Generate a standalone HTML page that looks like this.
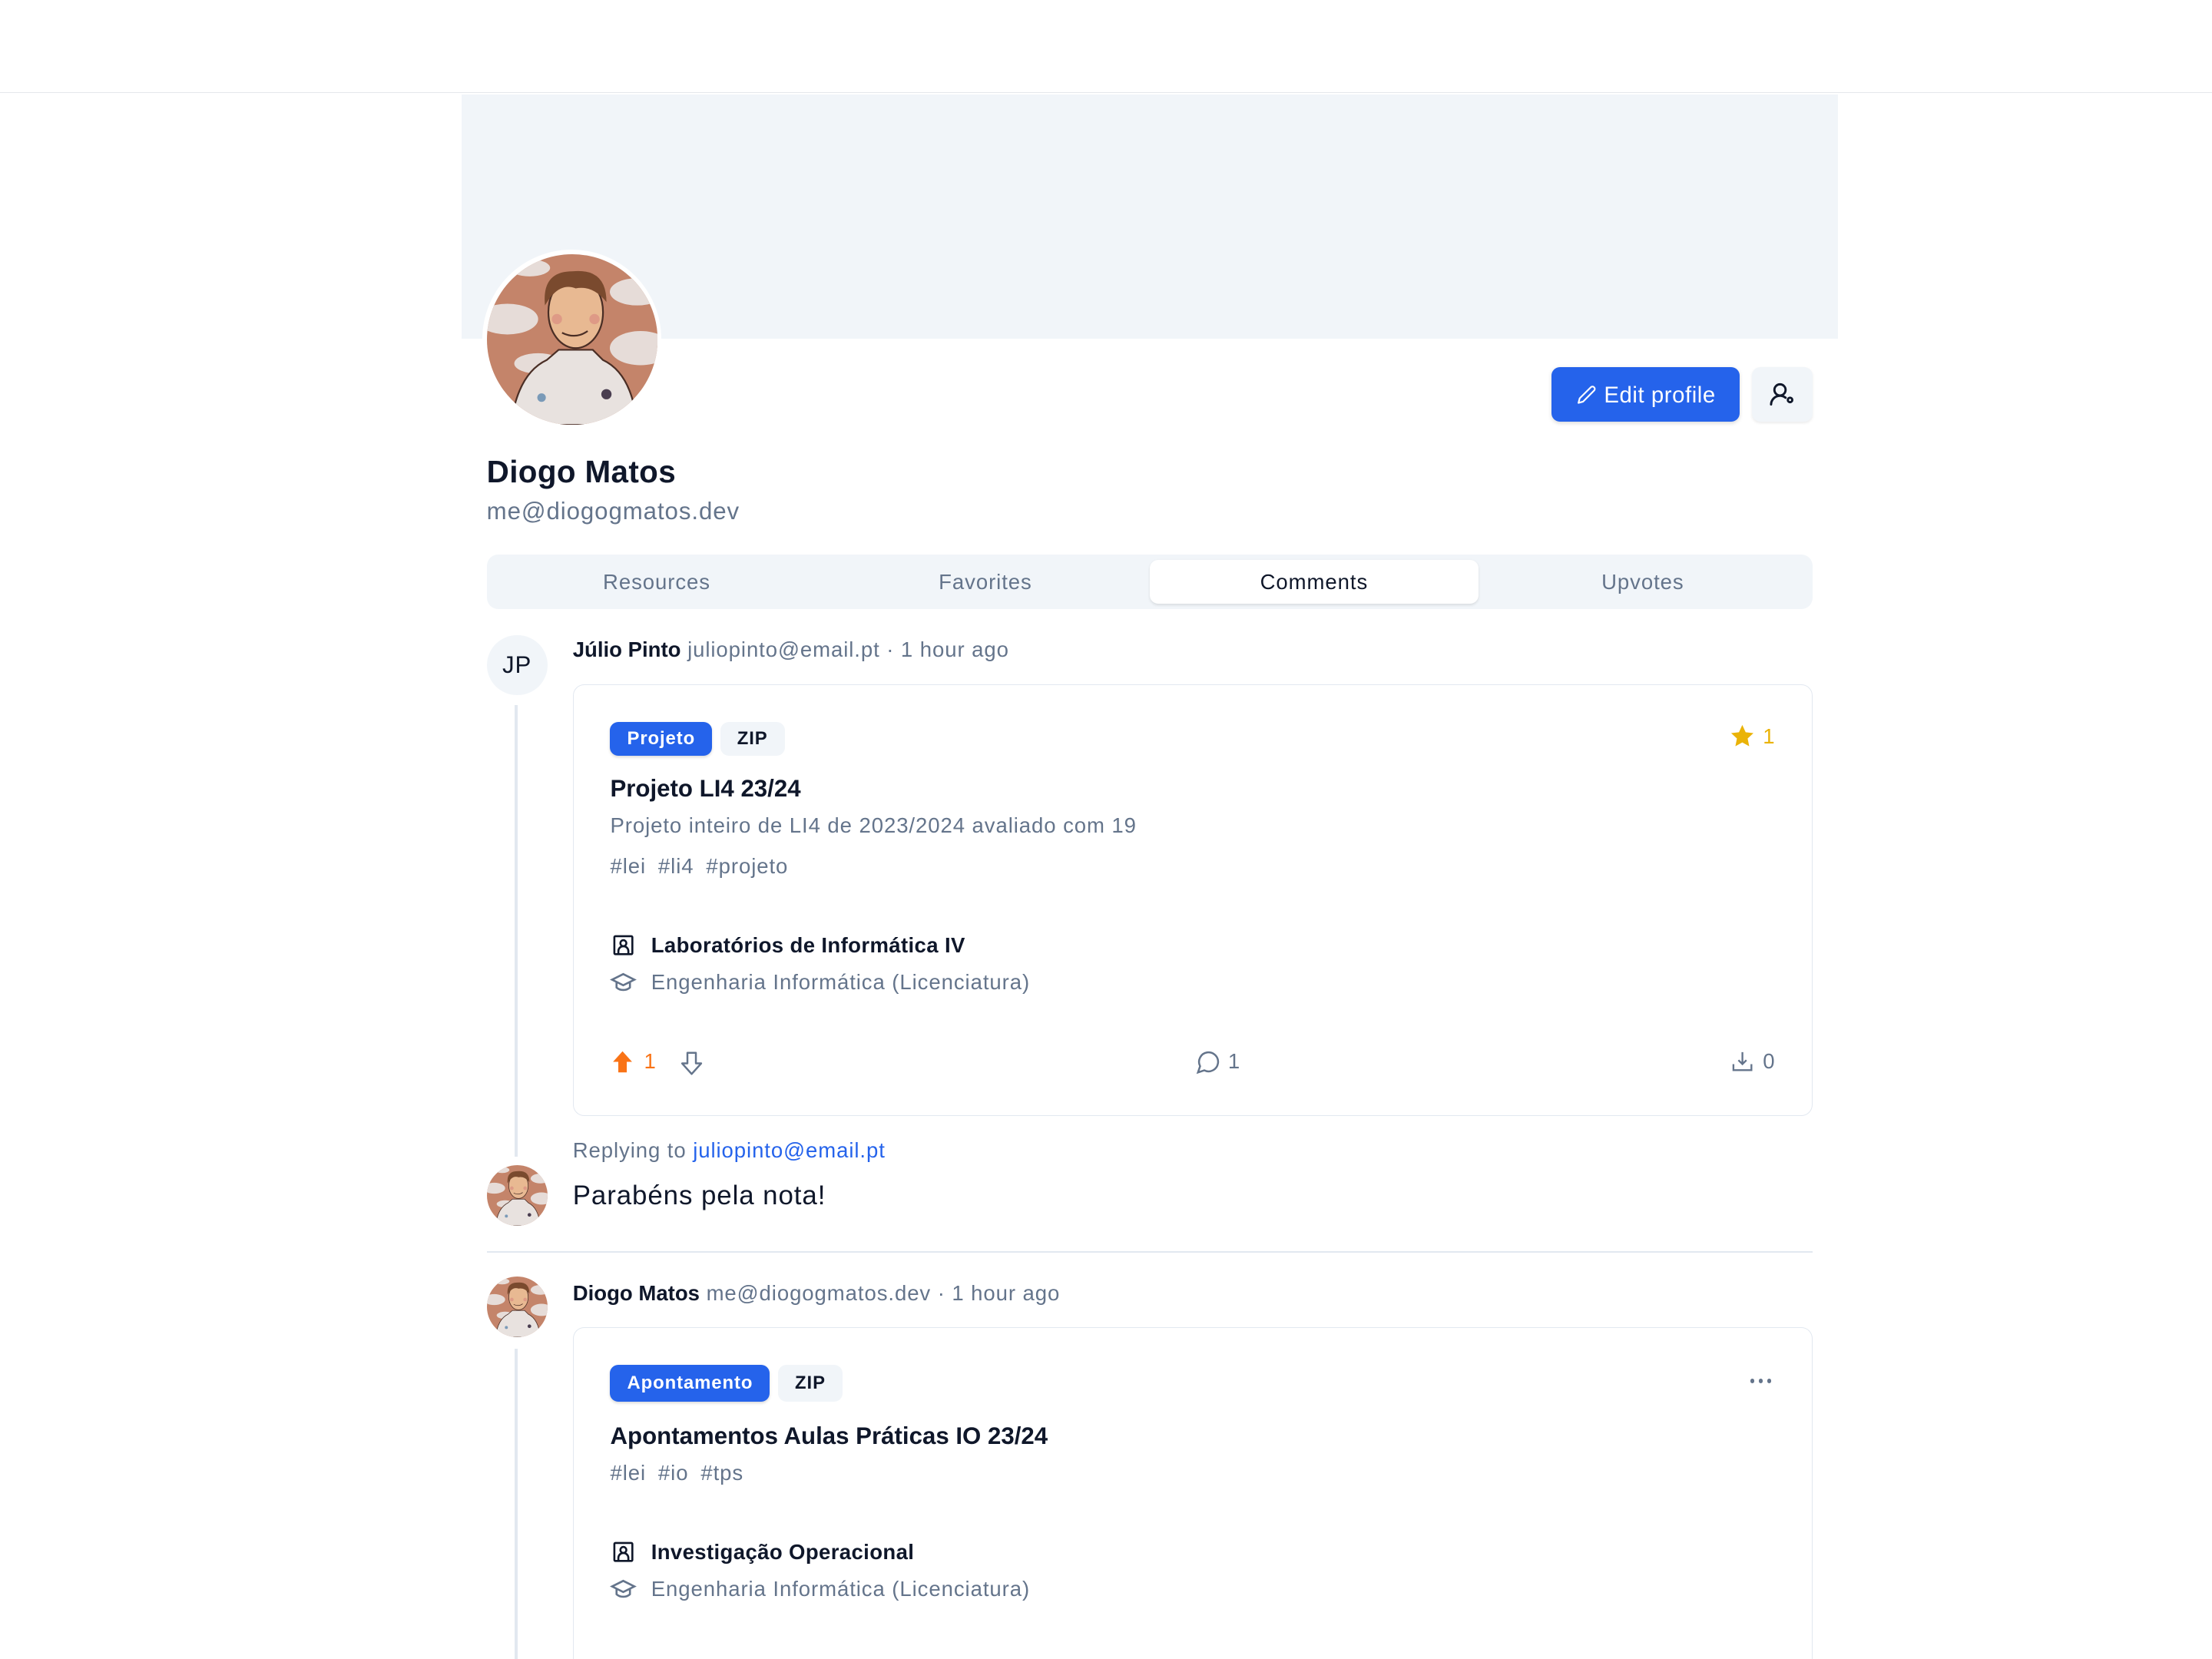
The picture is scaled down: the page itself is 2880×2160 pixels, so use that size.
<!DOCTYPE html>
<html><head><meta charset="utf-8">
<style>
*{box-sizing:border-box;margin:0;padding:0}
html,body{width:2880px;height:2160px;overflow:hidden;background:#fff}
body{font-family:"Liberation Sans",sans-serif;color:#0f172a;letter-spacing:0.5px}
#r{zoom:1.83673;width:1568px;height:1176px;position:relative;overflow:hidden}
.a{position:absolute}
.gray{color:#64748b}
.badge{position:absolute;height:24px;border-radius:6px;font-size:13px;font-weight:bold;line-height:24px;padding:0 12px}
.blue{background:#2563eb;color:#fff;box-shadow:0 1px 2px rgba(0,0,0,.15)}
.zip{background:#f1f5f9;color:#0f172a}
.card{position:absolute;left:406px;width:879px;border:1px solid #e2e8f0;border-radius:8px;background:#fff;overflow:hidden}
svg{display:block}
</style></head><body><div id="r">
<svg width="0" height="0" style="position:absolute"><defs>
<clipPath id="cc"><circle cx="50" cy="50" r="50"/></clipPath>
<symbol id="av" viewBox="0 0 100 100">
<g clip-path="url(#cc)">
<rect width="100" height="100" fill="#c4846a"/>
<ellipse cx="12" cy="38" rx="18" ry="9" fill="#e6dcd8"/>
<ellipse cx="88" cy="22" rx="16" ry="8" fill="#e6dcd8"/>
<ellipse cx="90" cy="55" rx="18" ry="10" fill="#e6dcd8"/>
<ellipse cx="30" cy="64" rx="14" ry="6" fill="#e6dcd8"/>
<ellipse cx="25" cy="8" rx="12" ry="5" fill="#e6dcd8"/>
<path d="M14 100 Q18 70 35 62 L42 56 L62 56 L68 62 Q85 70 88 100Z" fill="#e8e2df" stroke="#4a2e25" stroke-width="1"/>
<ellipse cx="52" cy="34" rx="16" ry="21" fill="#e8b992" stroke="#4a2e25" stroke-width="1"/>
<path d="M34 30 Q32 10 50 10 Q70 8 70 28 Q62 18 52 20 Q42 16 34 30Z" fill="#7a4a2e"/>
<circle cx="41" cy="38" r="3" fill="#de9a86"/><circle cx="63" cy="38" r="3" fill="#de9a86"/>
<path d="M44 46 Q52 50 59 45" stroke="#4a2e25" fill="none" stroke-width="1"/>
<circle cx="70" cy="82" r="3" fill="#4a3e50"/><circle cx="32" cy="84" r="2.5" fill="#7a9ab8"/>
</g></symbol></defs></svg>

<div class="a" style="left:0;top:0;width:1568px;height:66px;border-bottom:1px solid #e5e7eb"></div>
<div class="a" style="left:327px;top:67px;width:976px;height:173px;background:#f1f5f9"></div>
<div class="a" style="left:342px;top:177px;width:127px;height:127px;border-radius:50%;background:#fff;padding:3px"><svg width="121" height="121"><use href="#av"/></svg></div>

<div class="a" style="left:1100px;top:260px;width:133px;height:39px;background:#2563eb;border-radius:6px;color:#fff;font-size:16px;line-height:40px;padding-left:37px;box-shadow:0 1px 3px rgba(0,0,0,.15);letter-spacing:0.3px">Edit profile
<svg class="a" style="left:18px;top:13px" width="14" height="14" viewBox="0 0 24 24" fill="none" stroke="#fff" stroke-width="2" stroke-linecap="round" stroke-linejoin="round"><path d="M17 3a2.8 2.8 0 1 1 4 4L7.5 20.5 2 22l1.5-5.5Z"/></svg></div>
<div class="a" style="left:1242px;top:260px;width:43px;height:39px;background:#f1f5f9;border-radius:6px;box-shadow:0 1px 2px rgba(0,0,0,.08)">
<svg class="a" style="left:12px;top:10px" width="19" height="19" viewBox="0 0 24 24" fill="none" stroke="#0f172a" stroke-width="2" stroke-linecap="round"><circle cx="10" cy="8" r="5"/><path d="M2 21a8 8 0 0 1 13-6"/><circle cx="19" cy="17" r="2"/></svg></div>

<div class="a" style="left:345px;top:322px;font-size:22px;font-weight:bold;letter-spacing:0.2px">Diogo Matos</div>
<div class="a gray" style="left:345px;top:353px;font-size:17px">me@diogogmatos.dev</div>

<div class="a" style="left:345px;top:393px;width:940px;height:39px;background:#f1f5f9;border-radius:8px;font-size:15px;color:#64748b">
<div class="a" style="left:470px;top:4px;width:233px;height:31px;background:#fff;border-radius:6px;box-shadow:0 1px 2px rgba(0,0,0,.1)"></div>
<div class="a" style="left:4px;width:233px;text-align:center;top:11px">Resources</div>
<div class="a" style="left:237px;width:233px;text-align:center;top:11px">Favorites</div>
<div class="a" style="left:470px;width:233px;text-align:center;top:11px;color:#0f172a">Comments</div>
<div class="a" style="left:703px;width:233px;text-align:center;top:11px">Upvotes</div>
</div>

<!-- comment 1 -->
<div class="a" style="left:345px;top:450px;width:43px;height:43px;border-radius:50%;background:#f1f5f9;text-align:center;line-height:43px;font-size:17px">JP</div>
<div class="a" style="left:365px;top:500px;width:2px;height:320px;background:#e2e8f0"></div>
<div class="a" style="left:406px;top:452px;font-size:15px"><b style="letter-spacing:0">Júlio Pinto</b> <span class="gray">juliopinto@email.pt · 1 hour ago</span></div>
<div class="card" style="top:485px;height:306px">
<div class="badge blue" style="left:26px;top:26px">Projeto</div>
<div class="badge zip" style="left:104px;top:26px">ZIP</div>
<div class="a" style="right:26px;top:27px;color:#eab308;font-size:15px;display:flex;align-items:center;gap:5px"><svg width="19" height="19" viewBox="0 0 24 24" fill="#eab308"><path d="M12 2l3 6.5 7 .8-5.2 4.8 1.4 7L12 17.6 5.8 21.1l1.4-7L2 9.3l7-.8z"/></svg>1</div>
<div class="a" style="left:26px;top:64px;font-size:17px;font-weight:bold;letter-spacing:0">Projeto LI4 23/24</div>
<div class="a gray" style="left:26px;top:91px;font-size:15px">Projeto inteiro de LI4 de 2023/2024 avaliado com 19</div>
<div class="a gray" style="left:26px;top:120px;font-size:15px;word-spacing:4px">#lei #li4 #projeto</div>
<svg class="a" style="left:27px;top:176px" width="17" height="17" viewBox="0 0 24 24" fill="none" stroke="#0f172a" stroke-width="2"><rect x="3" y="3" width="18" height="18" rx="1"/><circle cx="12" cy="10" r="3"/><path d="M7 21v-3a5 5 0 0 1 10 0v3"/></svg>
<div class="a" style="left:55px;top:176px;font-size:15px;font-weight:bold;letter-spacing:0.2px">Laboratórios de Informática IV</div>
<svg class="a" style="left:26px;top:201px" width="19" height="19" viewBox="0 0 24 24" fill="none" stroke="#64748b" stroke-width="1.8"><path d="M22 10 12 5 2 10l10 5z"/><path d="M6 12v5c3 3 9 3 12 0v-5"/></svg>
<div class="a gray" style="left:55px;top:202px;font-size:15px">Engenharia Informática (Licenciatura)</div>
<div class="a" style="left:26px;top:258px;display:flex;align-items:center;color:#f97316;font-size:15px;gap:6px"><svg width="18" height="18" viewBox="0 0 24 24" fill="#f97316"><path d="M12 2 3 12h5v10h8V12h5z"/></svg>1</div>
<svg class="a" style="left:75px;top:259px" width="18" height="18" viewBox="0 0 24 24" fill="none" stroke="#64748b" stroke-width="1.8" stroke-linejoin="round"><path d="M12 22 3 12h5V2h8v10h5z"/></svg>
<div class="a" style="left:441px;top:258px;display:flex;align-items:center;color:#64748b;font-size:15px;gap:5px"><svg width="18" height="18" viewBox="0 0 24 24" fill="none" stroke="#64748b" stroke-width="1.8"><path d="M7.9 20A9 9 0 1 0 4 16.1L2 22Z"/></svg>1</div>
<div class="a" style="right:26px;top:258px;display:flex;align-items:center;color:#64748b;font-size:15px;gap:6px"><svg width="17" height="17" viewBox="0 0 24 24" fill="none" stroke="#64748b" stroke-width="1.8"><path d="M3 15v6h18v-6M12 3v12m-4-4 4 4 4-4"/></svg>0</div>
</div>
<div class="a gray" style="left:406px;top:807px;font-size:15px">Replying to <span style="color:#2563eb">juliopinto@email.pt</span></div>
<svg class="a" style="left:345px;top:826px" width="43" height="43"><use href="#av"/></svg>
<div class="a" style="left:406px;top:837px;font-size:19px">Parabéns pela nota!</div>
<div class="a" style="left:345px;top:887px;width:940px;height:1px;background:#e2e8f0"></div>

<!-- comment 2 -->
<svg class="a" style="left:345px;top:905px" width="43" height="43"><use href="#av"/></svg>
<div class="a" style="left:365px;top:956px;width:2px;height:220px;background:#e2e8f0"></div>
<div class="a" style="left:406px;top:908px;font-size:15px"><b style="letter-spacing:0">Diogo Matos</b> <span class="gray">me@diogogmatos.dev · 1 hour ago</span></div>
<div class="card" style="top:941px;height:235px;border-bottom:none;border-radius:8px 8px 0 0">
<div class="badge blue" style="left:26px;top:26px;height:26px;line-height:26px">Apontamento</div>
<div class="badge zip" style="left:145px;top:26px;height:26px;line-height:26px">ZIP</div>
<div class="a" style="left:834px;top:36px;display:flex;gap:3px"><i style="width:3px;height:3px;border-radius:50%;background:#64748b"></i><i style="width:3px;height:3px;border-radius:50%;background:#64748b"></i><i style="width:3px;height:3px;border-radius:50%;background:#64748b"></i></div>
<div class="a" style="left:26px;top:67px;font-size:17px;font-weight:bold;letter-spacing:0">Apontamentos Aulas Práticas IO 23/24</div>
<div class="a gray" style="left:26px;top:94px;font-size:15px;word-spacing:4px">#lei #io #tps</div>
<svg class="a" style="left:27px;top:150px" width="17" height="17" viewBox="0 0 24 24" fill="none" stroke="#0f172a" stroke-width="2"><rect x="3" y="3" width="18" height="18" rx="1"/><circle cx="12" cy="10" r="3"/><path d="M7 21v-3a5 5 0 0 1 10 0v3"/></svg>
<div class="a" style="left:55px;top:150px;font-size:15px;font-weight:bold;letter-spacing:0.2px">Investigação Operacional</div>
<svg class="a" style="left:26px;top:175px" width="19" height="19" viewBox="0 0 24 24" fill="none" stroke="#64748b" stroke-width="1.8"><path d="M22 10 12 5 2 10l10 5z"/><path d="M6 12v5c3 3 9 3 12 0v-5"/></svg>
<div class="a gray" style="left:55px;top:176px;font-size:15px">Engenharia Informática (Licenciatura)</div>
</div>
</div></body></html>
